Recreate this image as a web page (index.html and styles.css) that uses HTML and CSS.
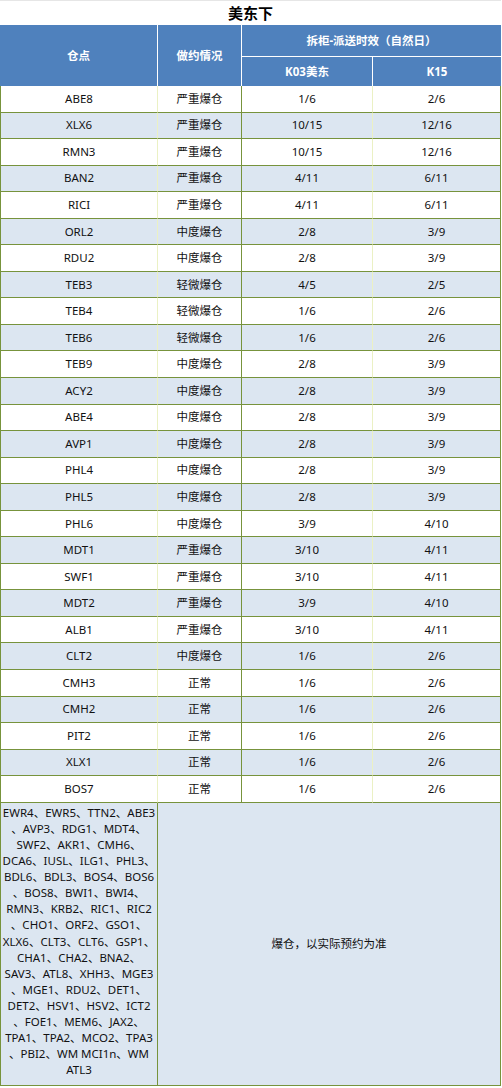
FILE: index.html
```html
<!DOCTYPE html>
<html lang="zh-CN">
<head>
<meta charset="utf-8">
<title>美东下</title>
<link rel="stylesheet" href="styles.css">
</head>
<body>
<table class="sheet">
  <colgroup>
    <col class="c1"><col class="c2"><col class="c3"><col class="c4">
  </colgroup>
  <thead>
    <tr class="title-row"><th colspan="4" class="title">美东下</th></tr>
    <tr class="head-row1">
      <th rowspan="2" class="h h-line">仓点</th>
      <th rowspan="2" class="h h-line">做约情况</th>
      <th colspan="2" class="h h-under">拆柜-派送时效（自然日）</th>
    </tr>
    <tr class="head-row2">
      <th class="h h-line">K03美东</th>
      <th class="h">K15</th>
    </tr>
  </thead>
  <tbody>
    <tr><td class="first">ABE8</td><td class="mid">严重爆仓</td><td class="third">1/6</td><td class="last">2/6</td></tr>
    <tr class="alt"><td class="first">XLX6</td><td class="mid">严重爆仓</td><td class="third">10/15</td><td class="last">12/16</td></tr>
    <tr><td class="first">RMN3</td><td class="mid">严重爆仓</td><td class="third">10/15</td><td class="last">12/16</td></tr>
    <tr class="alt"><td class="first">BAN2</td><td class="mid">严重爆仓</td><td class="third">4/11</td><td class="last">6/11</td></tr>
    <tr><td class="first">RICI</td><td class="mid">严重爆仓</td><td class="third">4/11</td><td class="last">6/11</td></tr>
    <tr class="alt"><td class="first">ORL2</td><td class="mid">中度爆仓</td><td class="third">2/8</td><td class="last">3/9</td></tr>
    <tr><td class="first">RDU2</td><td class="mid">中度爆仓</td><td class="third">2/8</td><td class="last">3/9</td></tr>
    <tr class="alt"><td class="first">TEB3</td><td class="mid">轻微爆仓</td><td class="third">4/5</td><td class="last">2/5</td></tr>
    <tr><td class="first">TEB4</td><td class="mid">轻微爆仓</td><td class="third">1/6</td><td class="last">2/6</td></tr>
    <tr class="alt"><td class="first">TEB6</td><td class="mid">轻微爆仓</td><td class="third">1/6</td><td class="last">2/6</td></tr>
    <tr><td class="first">TEB9</td><td class="mid">中度爆仓</td><td class="third">2/8</td><td class="last">3/9</td></tr>
    <tr class="alt"><td class="first">ACY2</td><td class="mid">中度爆仓</td><td class="third">2/8</td><td class="last">3/9</td></tr>
    <tr><td class="first">ABE4</td><td class="mid">中度爆仓</td><td class="third">2/8</td><td class="last">3/9</td></tr>
    <tr class="alt"><td class="first">AVP1</td><td class="mid">中度爆仓</td><td class="third">2/8</td><td class="last">3/9</td></tr>
    <tr><td class="first">PHL4</td><td class="mid">中度爆仓</td><td class="third">2/8</td><td class="last">3/9</td></tr>
    <tr class="alt"><td class="first">PHL5</td><td class="mid">中度爆仓</td><td class="third">2/8</td><td class="last">3/9</td></tr>
    <tr><td class="first">PHL6</td><td class="mid">中度爆仓</td><td class="third">3/9</td><td class="last">4/10</td></tr>
    <tr class="alt"><td class="first">MDT1</td><td class="mid">严重爆仓</td><td class="third">3/10</td><td class="last">4/11</td></tr>
    <tr><td class="first">SWF1</td><td class="mid">严重爆仓</td><td class="third">3/10</td><td class="last">4/11</td></tr>
    <tr class="alt"><td class="first">MDT2</td><td class="mid">严重爆仓</td><td class="third">3/9</td><td class="last">4/10</td></tr>
    <tr><td class="first">ALB1</td><td class="mid">严重爆仓</td><td class="third">3/10</td><td class="last">4/11</td></tr>
    <tr class="alt"><td class="first">CLT2</td><td class="mid">中度爆仓</td><td class="third">1/6</td><td class="last">2/6</td></tr>
    <tr><td class="first">CMH3</td><td class="mid">正常</td><td class="third">1/6</td><td class="last">2/6</td></tr>
    <tr class="alt"><td class="first">CMH2</td><td class="mid">正常</td><td class="third">1/6</td><td class="last">2/6</td></tr>
    <tr><td class="first">PIT2</td><td class="mid">正常</td><td class="third">1/6</td><td class="last">2/6</td></tr>
    <tr class="alt"><td class="first">XLX1</td><td class="mid">正常</td><td class="third">1/6</td><td class="last">2/6</td></tr>
    <tr><td class="first">BOS7</td><td class="mid">正常</td><td class="third">1/6</td><td class="last">2/6</td></tr>
    <tr class="alt bottom-row">
      <td class="first list">EWR4、EWR5、TTN2、ABE3<br>、AVP3、RDG1、MDT4、<br>SWF2、AKR1、CMH6、<br>DCA6、IUSL、ILG1、PHL3、<br>BDL6、BDL3、BOS4、BOS6<br>、BOS8、BWI1、BWI4、<br>RMN3、KRB2、RIC1、RIC2<br>、CHO1、ORF2、GSO1、<br>XLX6、CLT3、CLT6、GSP1、<br>CHA1、CHA2、BNA2、<br>SAV3、ATL8、XHH3、MGE3<br>、MGE1、RDU2、DET1、<br>DET2、HSV1、HSV2、ICT2<br>、FOE1、MEM6、JAX2、<br>TPA1、TPA2、MCO2、TPA3<br>、PBI2、WM MCI1n、WM<br>ATL3</td>
      <td colspan="3" class="last note">爆仓，以实际预约为准</td>
    </tr>
  </tbody>
</table>
</body>
</html>
```

FILE: styles.css
```css
html, body {
  margin: 0;
  padding: 0;
  background: #ffffff;
}

body {
  font-family: "Noto Sans", "Noto Sans CJK SC", sans-serif;
  color: #111111;
}

.sheet {
  border-collapse: separate;
  border-spacing: 0;
  width: 501px;
  table-layout: fixed;
  font-size: 11.5px;
}

.c1 { width: 158px; }
.c2 { width: 84px; }
.c3 { width: 131px; }
.c4 { width: 128px; }

.title-row { height: 25px; }

.title {
  font-size: 15px;
  font-weight: bold;
  color: #000000;
  background: #ffffff;
  border-top: 1px solid #e6e6e6;
  padding: 0;
  line-height: 20px;
}

.head-row1 { height: 32px; }
.head-row2 { height: 29px; }

.h {
  background: #4f81bd;
  color: #ffffff;
  font-weight: bold;
  font-size: 11.5px;
  padding: 0;
  line-height: 16px;
}

.h-line { border-right: 1px solid #ffffff; }
.h-under { border-bottom: 1px solid #ffffff; }

tbody tr { height: 26.55px; }

td {
  padding: 0;
  text-align: center;
  vertical-align: middle;
  line-height: 16px;
  border-bottom: 1px solid #77933c;
}

.alt td { background: #dce6f1; }

.first {
  border-left: 1px solid #77933c;
  border-right: 1px solid #ebf1c4;
}

.mid { border-right: 1px solid #77933c; }
.third { border-right: 1px solid #ebf1c4; }
.last { border-right: 1px solid #77933c; }

.list {
  white-space: nowrap;
  line-height: 16.1px;
  padding: 2px 0 7px;
  vertical-align: top;
  border-right: 1px solid #77933c;
}

.note {
  vertical-align: middle;
}
```
